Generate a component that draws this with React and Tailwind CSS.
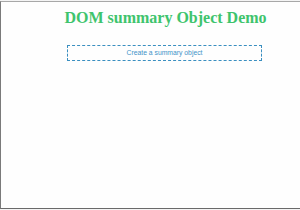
import React from "react";

const App = () => {
  return (
    <div className="w-[300px] h-[210px] overflow-hidden bg-[#f4f4f4] pt-px">
      <div className="h-[208px] w-[330px] bg-[#fefefe] border-t border-l border-b border-t-[#a8a8a8] border-l-[#7a7a7a] border-b-[#6a6a6a]">
        <h1 className="pt-[6px] text-center text-[16px] leading-[20px] font-bold text-[#3ec46d] font-['Liberation_Serif',serif]">
          DOM summary Object Demo
        </h1>
        <div className="mt-[17px] ml-[66px] w-[195px] h-[16px] border border-dashed border-[#3a8fc0] flex items-center justify-center">
          <span className="text-[6.8px] leading-none text-[#4293c8] font-['Liberation_Sans',sans-serif]">
            Create a summary object
          </span>
        </div>
      </div>
    </div>
  );
};

export default App;
